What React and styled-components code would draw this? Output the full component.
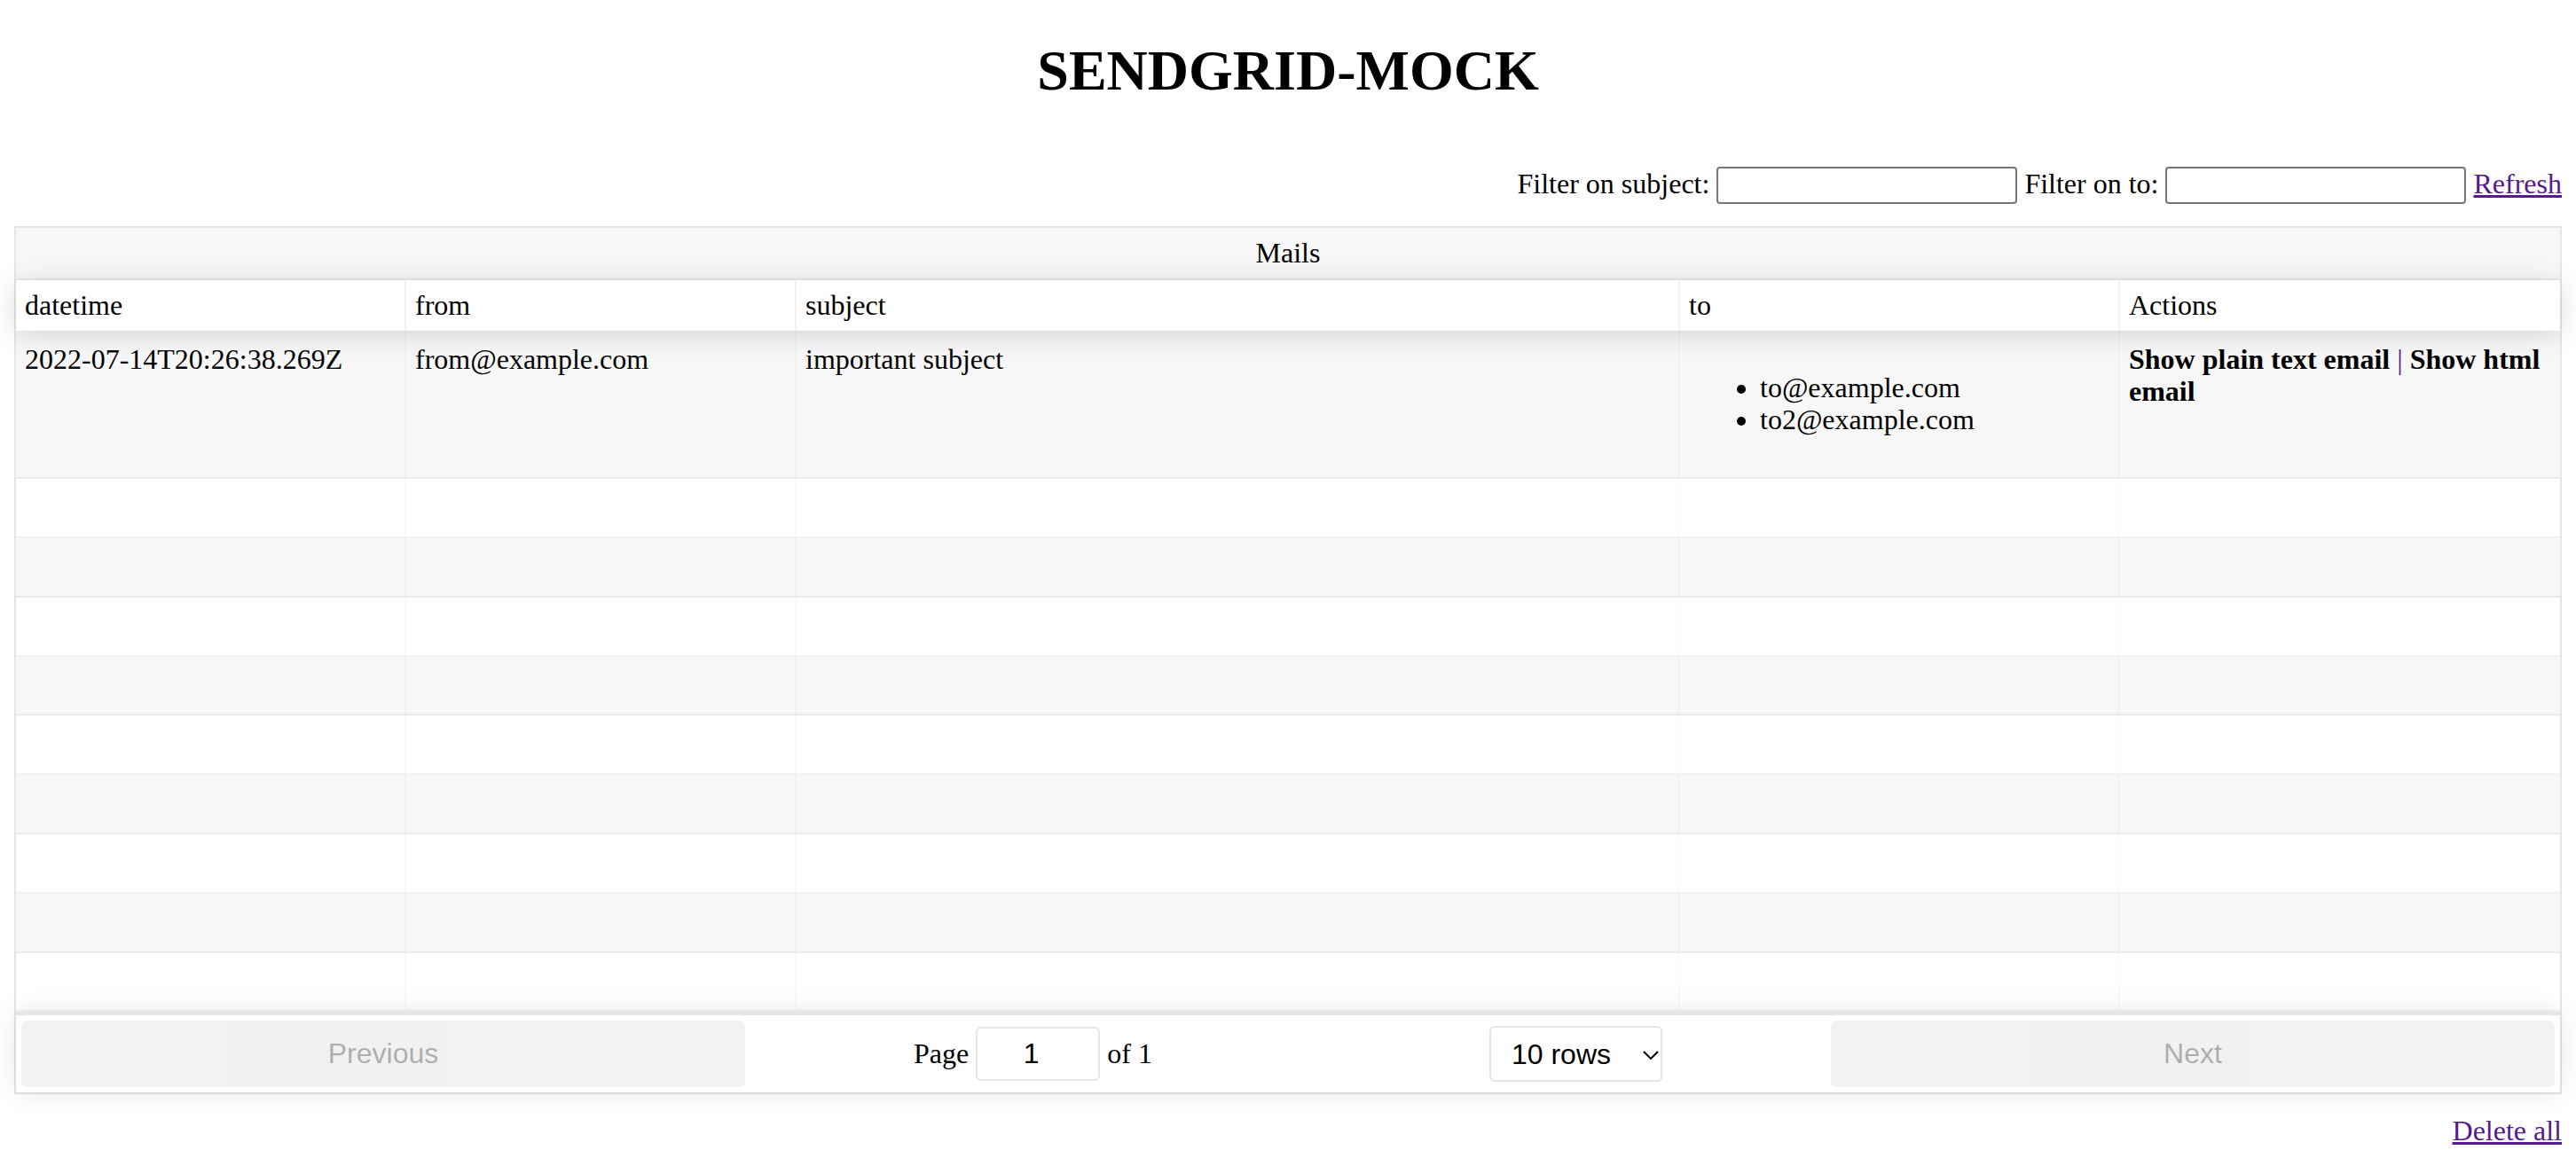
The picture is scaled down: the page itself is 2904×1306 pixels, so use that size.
import React from 'react';
import styled, { createGlobalStyle } from 'styled-components';

const GlobalStyle = createGlobalStyle`
  html, body {
    margin: 0;
    padding: 0;
    background: #fff;
  }
  body {
    font-family: "Liberation Serif", "Times New Roman", serif;
    font-size: 32px;
    color: #000;
  }
  * {
    box-sizing: border-box;
  }
`

const COLUMNS = '440px 440px 996px 496px 1fr';

const Page = styled.div`
  padding: 0 16px;
`

const Title = styled.h1`
  margin: 43px 0 0;
  font-size: 64px;
  font-weight: bold;
  text-align: center;
  line-height: normal;
`

const FilterBar = styled.div`
  margin-top: 71px;
  text-align: right;
  line-height: 36.8px;
`

const FilterInput = styled.input`
  width: 339px;
  height: 42px;
  padding: 2px 4px;
  border: 2px solid #767676;
  border-radius: 4px;
  font-family: "Liberation Sans", Arial, sans-serif;
  font-size: 26.67px;
  background: #fff;
`

const Link = styled.a`
  color: #551a8b;
  text-decoration: underline;
  cursor: pointer;
`

const Table = styled.div`
  margin-top: 25px;
  display: flex;
  flex-direction: column;
  border: 2px solid rgba(0, 0, 0, 0.1);
  position: relative;
`

const GroupHeader = styled.div`
  padding: 10px;
  line-height: 36.8px;
  text-align: center;
  background: rgba(0, 0, 0, 0.03);
  border-bottom: 2px solid rgba(0, 0, 0, 0.05);
`

const HeaderRow = styled.div`
  display: grid;
  grid-template-columns: ${COLUMNS};
  box-shadow: 0 4px 30px 0 rgba(0, 0, 0, 0.15);
`

const HeaderCell = styled.div`
  padding: 10px;
  line-height: 36.8px;
  border-right: 2px solid rgba(0, 0, 0, 0.05);
  white-space: nowrap;
  overflow: hidden;

  &:last-child {
    border-right: 0;
  }
`

const Row = styled.div`
  display: grid;
  grid-template-columns: ${COLUMNS};
  background: ${(p) => (p.$odd ? 'rgba(0, 0, 0, 0.03)' : 'transparent')};
  border-bottom: 2px solid rgba(0, 0, 0, 0.05);
`

const Cell = styled.div`
  padding: 14px 10px;
  line-height: 36.8px;
  border-right: 2px solid rgba(0, 0, 0, 0.02);
  white-space: ${(p) => (p.$wrap ? 'normal' : 'nowrap')};
  overflow: hidden;

  &:last-child {
    border-right: 0;
  }
`

const ToList = styled.ul`
  margin: 32px 0;
  padding-left: 80px;
`

const Pipe = styled.span`
  color: #551a8b;
  font-weight: normal;
`

const Pagination = styled.div`
  z-index: 1;
  display: flex;
  justify-content: space-between;
  align-items: stretch;
  padding: 6px;
  border-top: 4px solid rgba(0, 0, 0, 0.1);
  box-shadow: 0 0 30px 0 rgba(0, 0, 0, 0.1);
`

const Side = styled.div`
  flex: 1;
  text-align: center;
`

const PageButton = styled.button`
  appearance: none;
  display: block;
  width: 100%;
  height: 100%;
  border: 0;
  border-radius: 6px;
  padding: 12px;
  font-family: "Liberation Sans", Arial, sans-serif;
  font-size: 32px;
  line-height: 36.8px;
  color: rgba(0, 0, 0, 0.6);
  background: rgba(0, 0, 0, 0.1);
  opacity: 0.5;
  cursor: default;
`

const Center = styled.div`
  flex: 1.5;
  display: flex;
  flex-direction: row;
  flex-wrap: wrap;
  align-items: center;
  justify-content: space-around;
  text-align: center;
`

const PageInfo = styled.span`
  display: inline-block;
  margin: 6px 20px;
  white-space: nowrap;
  line-height: 36.8px;
`

const PageJump = styled.input`
  width: 140px;
  padding: 10px 14px;
  border: 2px solid rgba(0, 0, 0, 0.1);
  border-radius: 6px;
  background: #fff;
  font-family: "Liberation Sans", Arial, sans-serif;
  font-size: 32px;
  line-height: 36.8px;
  text-align: center;
  outline: none;
`

const SizeWrap = styled.span`
  position: relative;
  display: inline-block;
  margin: 6px 20px;
`

const SizeSelect = styled.select`
  appearance: none;
  display: block;
  width: 195px;
  height: 63px;
  padding: 10px 40px 10px 23px;
  border: 2px solid rgba(0, 0, 0, 0.1);
  border-radius: 6px;
  background: #fff;
  font-family: "Liberation Sans", Arial, sans-serif;
  font-size: 32px;
  color: #000;
  outline: none;
`

const Chevron = styled.svg`
  position: absolute;
  right: 4px;
  top: 28px;
  pointer-events: none;
`

const DeleteBar = styled.div`
  margin-top: 23px;
  text-align: right;
  line-height: 36.8px;
`

const mails = [
  {
    datetime: '2022-07-14T20:26:38.269Z',
    from: 'from@example.com',
    subject: 'important subject',
    to: ['to@example.com', 'to2@example.com'],
  },
];

const PAGE_SIZE = 10;

export default function App() {
  const padRows = Array.from({ length: PAGE_SIZE - mails.length });

  return (
    <Page>
      <GlobalStyle />
      <Title>SENDGRID-MOCK</Title>
      <FilterBar>
        Filter on subject: <FilterInput type="text" /> Filter on to: <FilterInput type="text" />{' '}
        <Link href="#refresh">Refresh</Link>
      </FilterBar>

      <Table>
        <GroupHeader>Mails</GroupHeader>
        <HeaderRow>
          <HeaderCell>datetime</HeaderCell>
          <HeaderCell>from</HeaderCell>
          <HeaderCell>subject</HeaderCell>
          <HeaderCell>to</HeaderCell>
          <HeaderCell>Actions</HeaderCell>
        </HeaderRow>

        {mails.map((mail, i) => (
          <Row key={mail.datetime} $odd={i % 2 === 0}>
            <Cell>{mail.datetime}</Cell>
            <Cell>{mail.from}</Cell>
            <Cell>{mail.subject}</Cell>
            <Cell $wrap>
              <ToList>
                {mail.to.map((t) => (
                  <li key={t}>{t}</li>
                ))}
              </ToList>
            </Cell>
            <Cell $wrap>
              <b>Show plain text email</b> <Pipe>|</Pipe> <b>Show html email</b>
            </Cell>
          </Row>
        ))}

        {padRows.map((_, i) => (
          <Row key={i} $odd={(i + mails.length) % 2 === 0}>
            <Cell>&nbsp;</Cell>
            <Cell>&nbsp;</Cell>
            <Cell>&nbsp;</Cell>
            <Cell>&nbsp;</Cell>
            <Cell>&nbsp;</Cell>
          </Row>
        ))}

        <Pagination>
          <Side>
            <PageButton disabled>Previous</PageButton>
          </Side>
          <Center>
            <PageInfo>
              Page <PageJump type="number" defaultValue={1} /> of 1
            </PageInfo>
            <SizeWrap>
              <SizeSelect defaultValue="10">
                <option value="5">5 rows</option>
                <option value="10">10 rows</option>
                <option value="20">20 rows</option>
                <option value="25">25 rows</option>
                <option value="50">50 rows</option>
                <option value="100">100 rows</option>
              </SizeSelect>
              <Chevron width="18" height="10" viewBox="0 0 18 10">
                <polyline points="1,1 9,9 17,1" fill="none" stroke="#000" strokeWidth="2" />
              </Chevron>
            </SizeWrap>
          </Center>
          <Side>
            <PageButton disabled>Next</PageButton>
          </Side>
        </Pagination>
      </Table>

      <DeleteBar>
        <Link href="#delete">Delete all</Link>
      </DeleteBar>
    </Page>
  );
}
